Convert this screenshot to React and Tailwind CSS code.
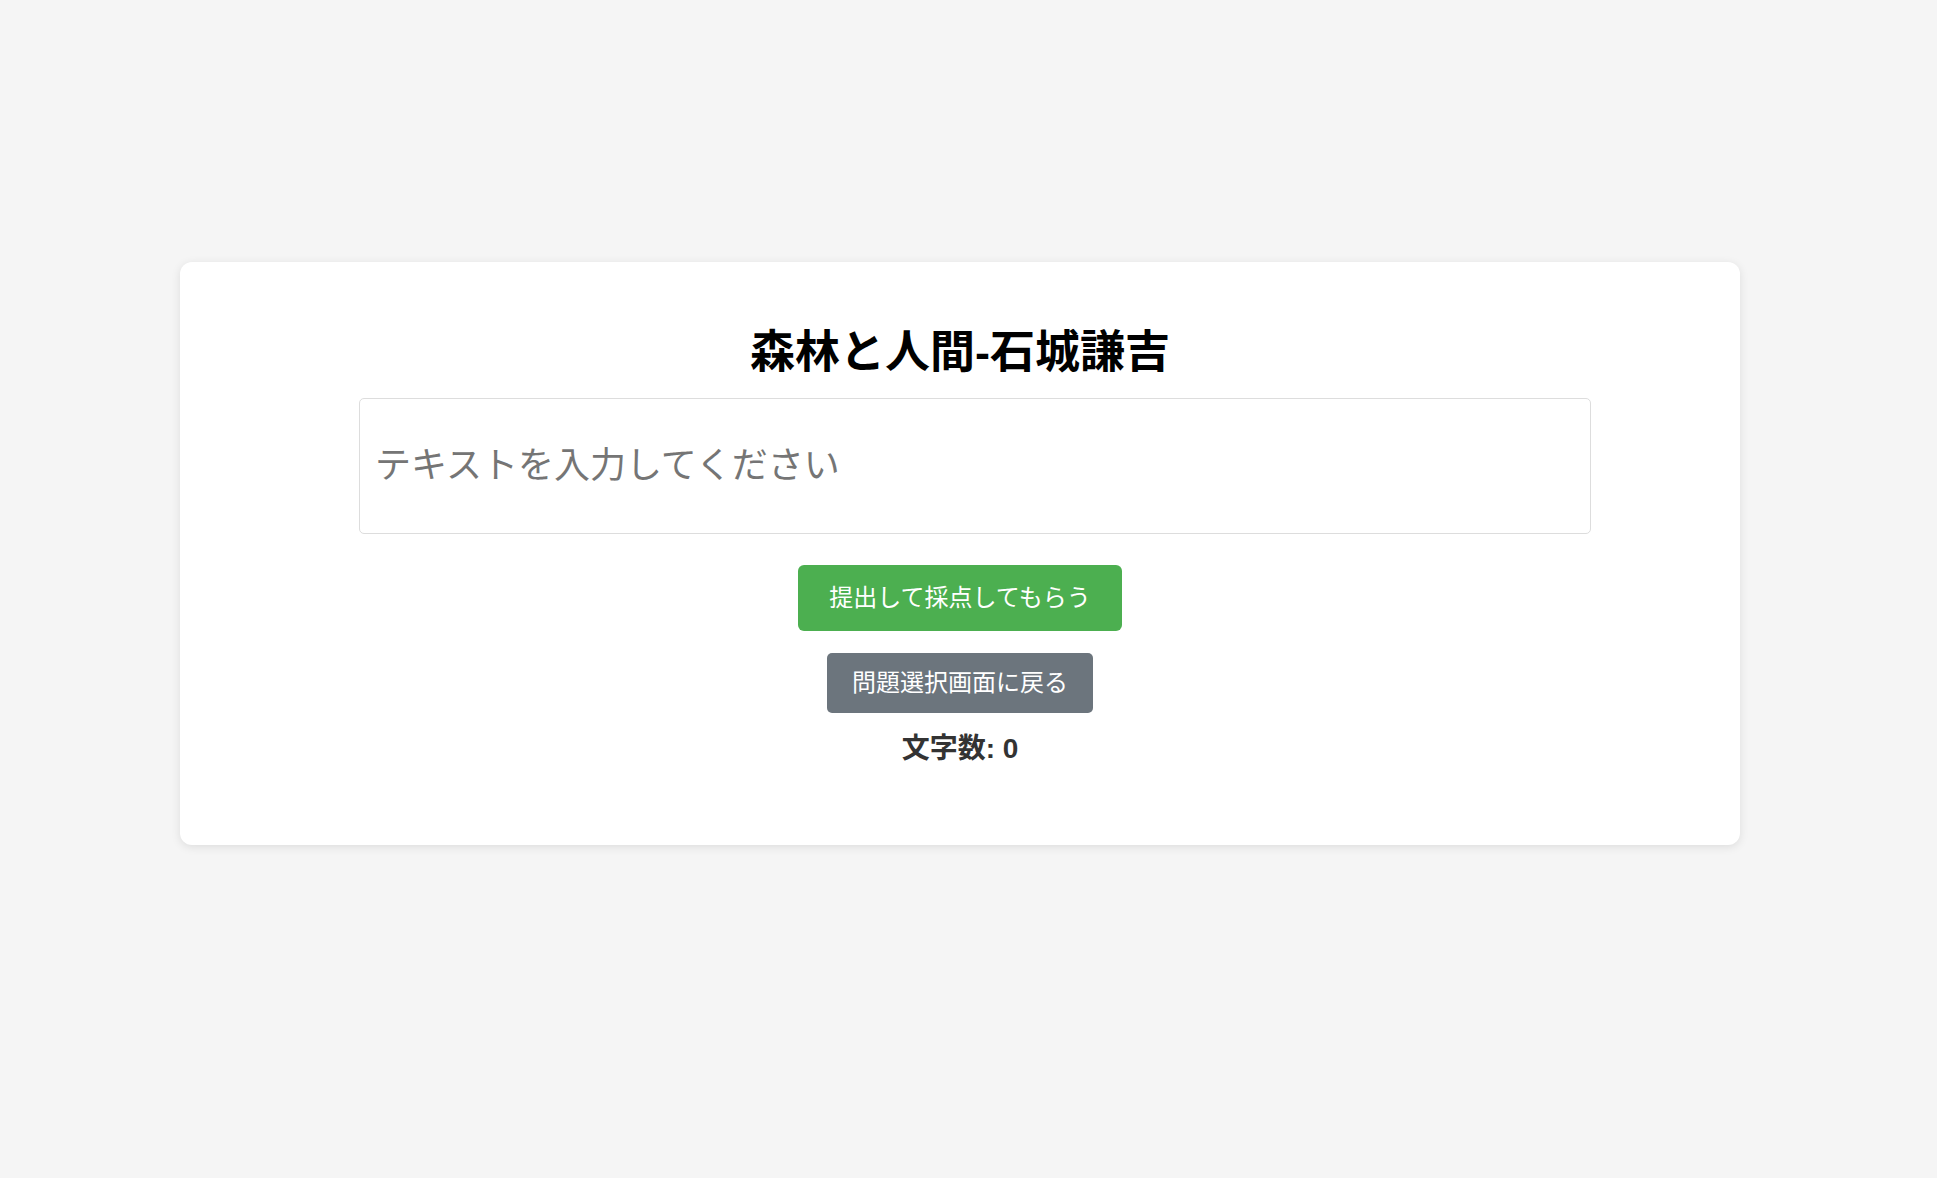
import { useState } from 'react'

// Essay page: title, answer box, submit / back buttons and a live character count.
const FONT = { fontFamily: '"Liberation Sans", "Noto Sans CJK JP", sans-serif' }

export default function App() {
  const [text, setText] = useState('')

  return (
    <div className="min-h-screen bg-[#f5f5f5] pt-[262px]" style={FONT}>
      <div className="flex w-[1920px] justify-center">
        <div className="flex h-[583px] w-[1560px] flex-col items-center rounded-xl bg-white pt-[64px] shadow-[0_2px_10px_rgba(0,0,0,0.1)]">
          <h1 className="mb-[19px] text-[45px] leading-[53px] font-bold text-black">森林と人間-石城謙吉</h1>

          <textarea
            value={text}
            onChange={(e) => setText(e.target.value)}
            placeholder="テキストを入力してください"
            className="ml-[30px] h-[136px] w-[1232px] resize-none rounded-[5px] border border-[#dddddd] px-[15px] pt-[40px] text-[36px] leading-[54px] text-[#333] outline-none placeholder:text-[#757575]"
          />

          <button className="mt-[31px] h-[66px] rounded-[6px] bg-[#4caf50] px-[31px] text-[24px] text-white">
            提出して採点してもらう
          </button>

          <button className="mt-[22px] h-[60px] rounded-[5px] bg-[#6c757d] px-[25px] text-[24px] text-white">
            問題選択画面に戻る
          </button>

          <p className="mt-[19px] text-[28px] leading-[34px] font-bold text-[#333]">文字数: {text.length}</p>
        </div>
      </div>
    </div>
  )
}
